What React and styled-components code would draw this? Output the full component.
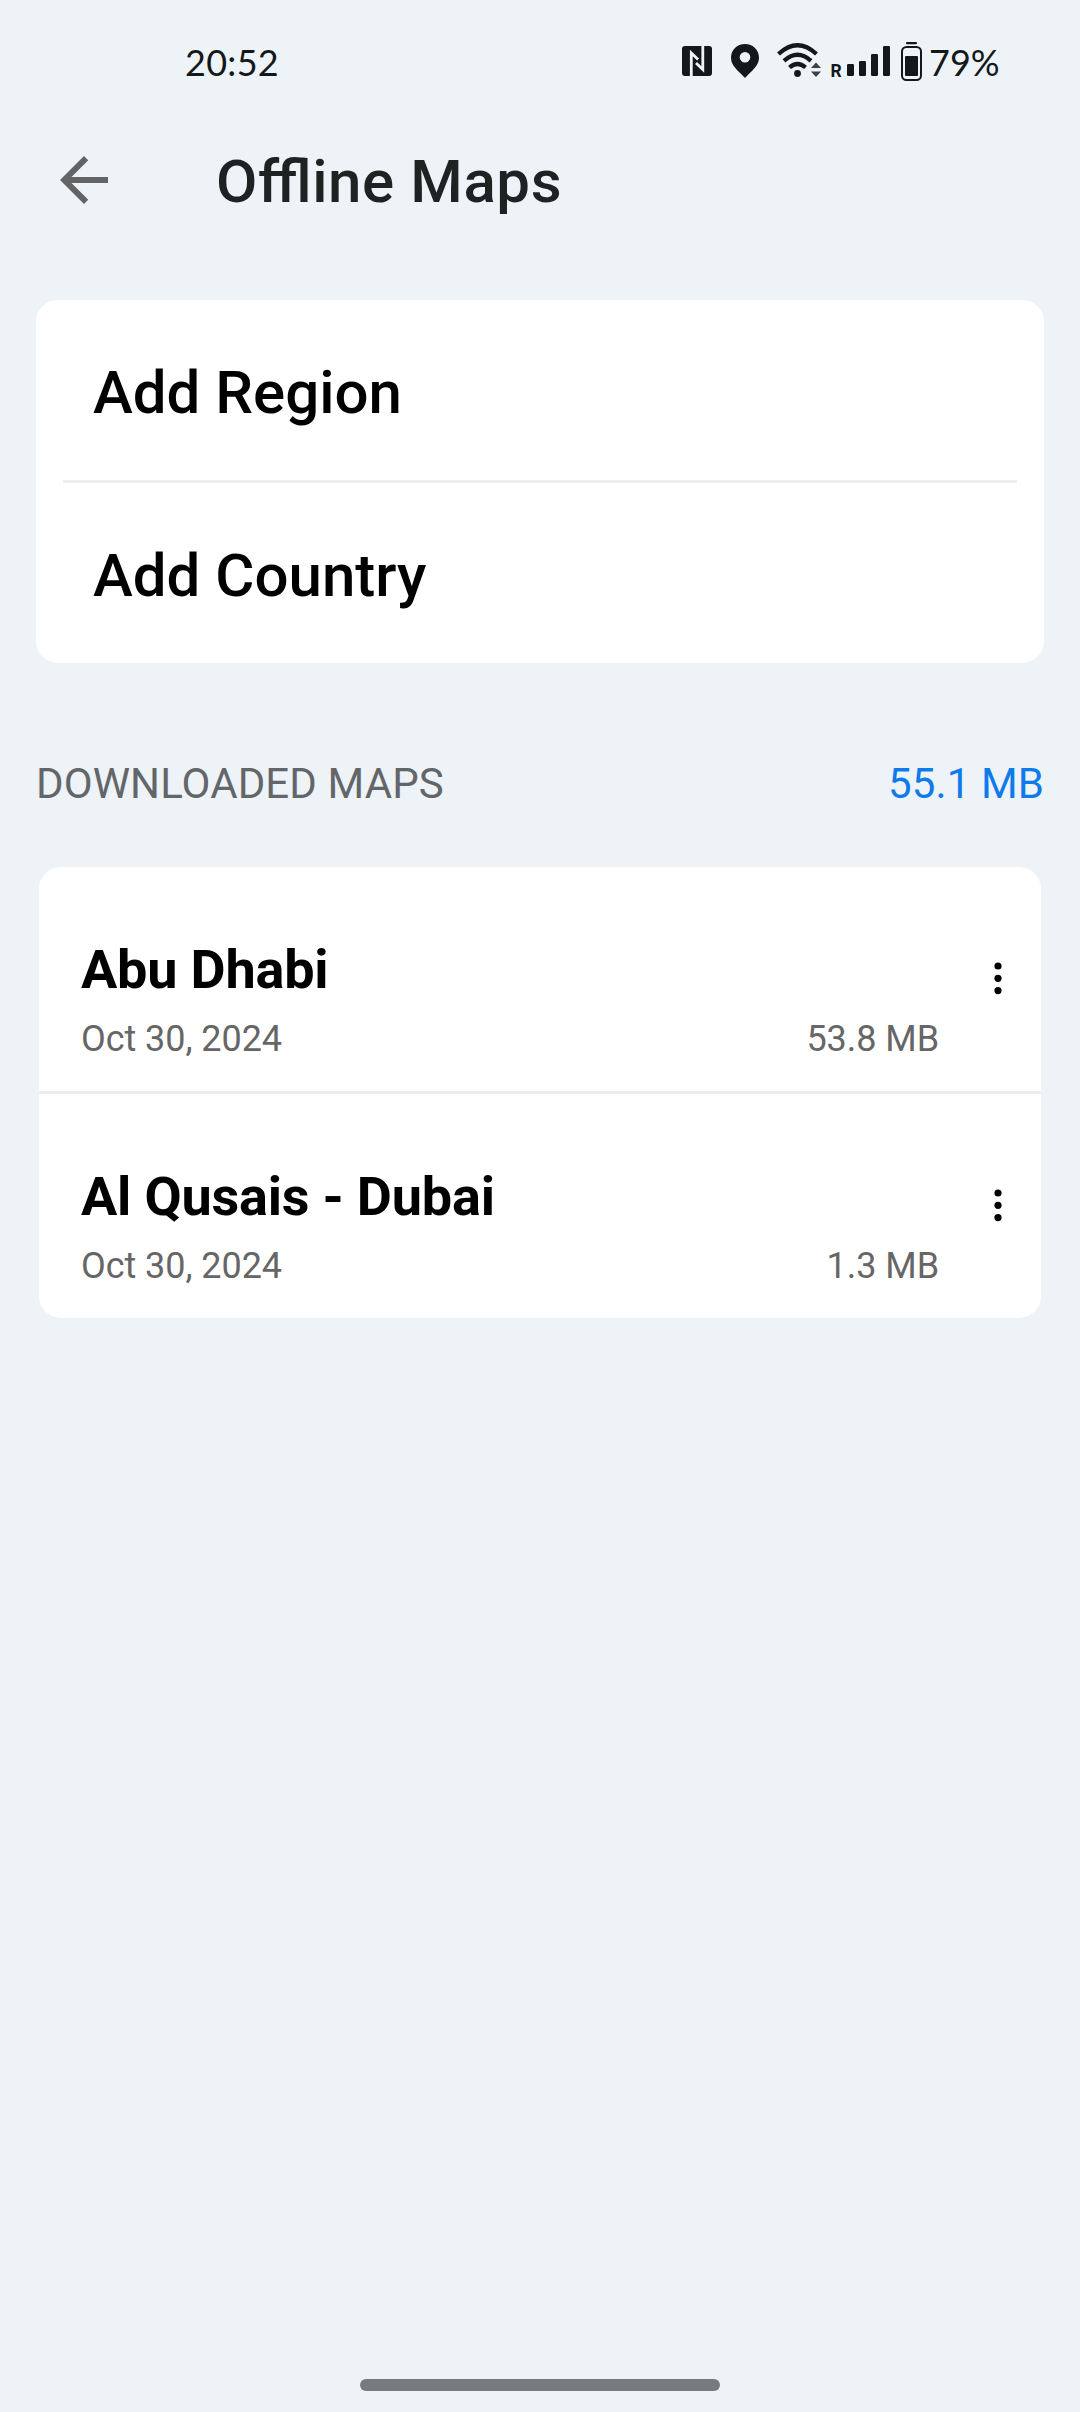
import React from "react";
import styled, { createGlobalStyle } from "styled-components";

// ========== DATA ===========
const actions = ["Add Region", "Add Country"];

const maps = [
  { name: "Abu Dhabi", date: "Oct 30, 2024", size: "53.8 MB" },
  { name: "Al Qusais - Dubai", date: "Oct 30, 2024", size: "1.3 MB" }
];

// ========== STYLED COMPONENTS ===========
const GlobalStyle = createGlobalStyle`
  * {
    box-sizing: border-box;
  }

  body {
    margin: 0;
    background: #eef3f7;
    font-family: Roboto, sans-serif;
  }
`;

const Screen = styled.div`
  display: flex;
  flex-direction: column;
  width: 1080px;
  height: 2412px;
  background: #eef3f7;
  overflow: hidden;
`;

const StatusBar = styled.div`
  display: flex;
  align-items: center;
  justify-content: space-between;
  height: 124px;
  padding: 0 80px 0 185px;
  font-family: Lato, sans-serif;
  font-size: 36px;
  line-height: 44px;
  color: #14181a;
`;

const Clock = styled.span`
  letter-spacing: 0.3px;
`;

const StatusIcons = styled.div`
  display: flex;
  align-items: center;

  svg {
    display: block;
  }
`;

const Battery = styled.span`
  width: 71px;
  margin-left: 5px;
  white-space: nowrap;
`;

const AppBar = styled.header`
  display: flex;
  align-items: center;
  height: 112px;
  padding-left: 48px;
`;

const BackButton = styled.button`
  display: flex;
  padding: 0;
  border: 0;
  background: none;
  color: #636466;
`;

const Title = styled.h1`
  margin: 4px 0 0 96px;
  font-size: 60px;
  font-weight: 500;
  font-feature-settings: "liga" 1;
  letter-spacing: 0.6px;
  line-height: 70px;
  color: #1e2223;
`;

const ActionCard = styled.section`
  height: 363px;
  margin: 64px 36px 0;
  padding: 0 27px;
  border-radius: 22px;
  background: #fff;
`;

const ActionRow = styled.div`
  height: 180px;
  padding: 58px 30px 0;
  font-size: 60px;
  font-weight: 500;
  line-height: 70px;
  color: #000;

  & + & {
    height: 183px;
    border-top: 3px solid #eee;
  }
`;

const SectionHeader = styled.div`
  display: flex;
  justify-content: space-between;
  margin: 96px 36px 0;
  font-size: 42px;
  letter-spacing: 0.12px;
  line-height: 50px;
  color: #636669;
`;

const TotalSize = styled.span`
  color: #0f7bea;
`;

const MapCard = styled.section`
  margin: 58px 39px 0;
  border-radius: 22px;
  background: #fff;
`;

const MapRow = styled.div`
  display: flex;
  height: 224px;
  padding: 71px 39px 0 42px;

  & + & {
    height: 227px;
    border-top: 3px solid #ececee;
  }
`;

const MapInfo = styled.div`
  flex: 1;
`;

const MapName = styled.h2`
  margin: 0;
  font-size: 54px;
  font-weight: 700;
  letter-spacing: -0.2px;
  line-height: 64px;
  color: #000;
`;

const MapMeta = styled.div`
  display: flex;
  justify-content: space-between;
  margin-top: 16px;
  font-size: 36px;
  letter-spacing: -0.06px;
  line-height: 42px;
  color: #666;
`;

const MenuButton = styled.button`
  display: flex;
  align-self: flex-start;
  margin: 23px 0 0 55px;
  padding: 0;
  border: 0;
  background: none;
  color: #000;
`;

const HomeIndicator = styled.div`
  width: 360px;
  height: 12px;
  margin: auto auto 21px;
  border-radius: 6px;
  background: #777b7e;
`;

// ========== ICONS ===========
// nfc, location, wifi, signal and battery share one strip
const StatusGlyphs = () => (
  <svg width="244" height="44" viewBox="680 40 244 44" fill="#14181a">
    <rect x="682" y="46" width="30" height="30" rx="3" />
    <path
      d="M691.300 76V53l6.800 6.600M702.800 46v23.500l-6.800-6.600"
      fill="none"
      stroke="#eef3f7"
      strokeWidth="2.800"
    />
    <path
      fillRule="evenodd"
      d="M745 44c-8 0-14 6-14 13.8 0 8.2 7 12.600 14 20.200 7-7.600 14-12 14-20.200C759 50 753 44 745 44zm0 8a5.300 5.300 0 1 1 0 10.600 5.300 5.300 0 0 1 0-10.600z"
    />
    <g fill="none" stroke="#14181a" strokeWidth="4.300">
      <path d="M778.500 54Q797.500 36.500 816.500 54" />
      <path d="M784 60.800Q797.500 48.500 811 60.800" />
      <path d="M789.500 67.500Q797.500 60.500 805.500 67.500" />
    </g>
    <circle cx="797.500" cy="73.500" r="3.400" />
    <path d="M811 68h10l-5-5.500zM811 71.500h10l-5 5.500z" fill="#3c4042" />
    <text x="830.500" y="77" fontFamily="Roboto" fontSize="17.500" fontWeight="700">
      R
    </text>
    <rect x="847" y="64" width="7" height="12" rx="1.200" />
    <rect x="859" y="61" width="7" height="15" rx="1.200" />
    <rect x="871" y="54" width="7" height="22" rx="1.200" />
    <rect x="883" y="46" width="7" height="30" rx="1.200" />
    <rect x="906" y="42" width="11" height="2.200" rx="1" />
    <rect x="902" y="47" width="19" height="33" rx="4.500" fill="none" stroke="#14181a" strokeWidth="2" />
    <rect x="905" y="56" width="13" height="20" rx="1" />
  </svg>
);

const BackIcon = () => (
  <svg width="72" height="72" viewBox="0 0 24 24" fill="currentColor">
    <path d="M20 11H7.830l5.590-5.590L12 4l-8 8 8 8 1.410-1.410L7.830 13H20v-2z" />
  </svg>
);

const DotsIcon = () => (
  <svg width="8" height="34" viewBox="0 0 8 34" fill="currentColor">
    <circle cx="4" cy="5" r="3.600" />
    <circle cx="4" cy="17.300" r="3.600" />
    <circle cx="4" cy="29.600" r="3.600" />
  </svg>
);

// ========== COMPONENT ===========
const App = () => {
  return (
    <>
      <GlobalStyle />
      <Screen>
        <StatusBar>
          <Clock>20:52</Clock>
          <StatusIcons>
            <StatusGlyphs />
            <Battery>79%</Battery>
          </StatusIcons>
        </StatusBar>

        <AppBar>
          <BackButton aria-label="Back">
            <BackIcon />
          </BackButton>
          <Title>Offline Maps</Title>
        </AppBar>

        <ActionCard>
          {actions.map((label) => (
            <ActionRow key={label}>{label}</ActionRow>
          ))}
        </ActionCard>

        <SectionHeader>
          <span>DOWNLOADED MAPS</span>
          <TotalSize>55.1 MB</TotalSize>
        </SectionHeader>

        <MapCard>
          {maps.map((map) => (
            <MapRow key={map.name}>
              <MapInfo>
                <MapName>{map.name}</MapName>
                <MapMeta>
                  <span>{map.date}</span>
                  <span>{map.size}</span>
                </MapMeta>
              </MapInfo>
              <MenuButton aria-label="More options">
                <DotsIcon />
              </MenuButton>
            </MapRow>
          ))}
        </MapCard>

        <HomeIndicator />
      </Screen>
    </>
  );
};

export default App;
